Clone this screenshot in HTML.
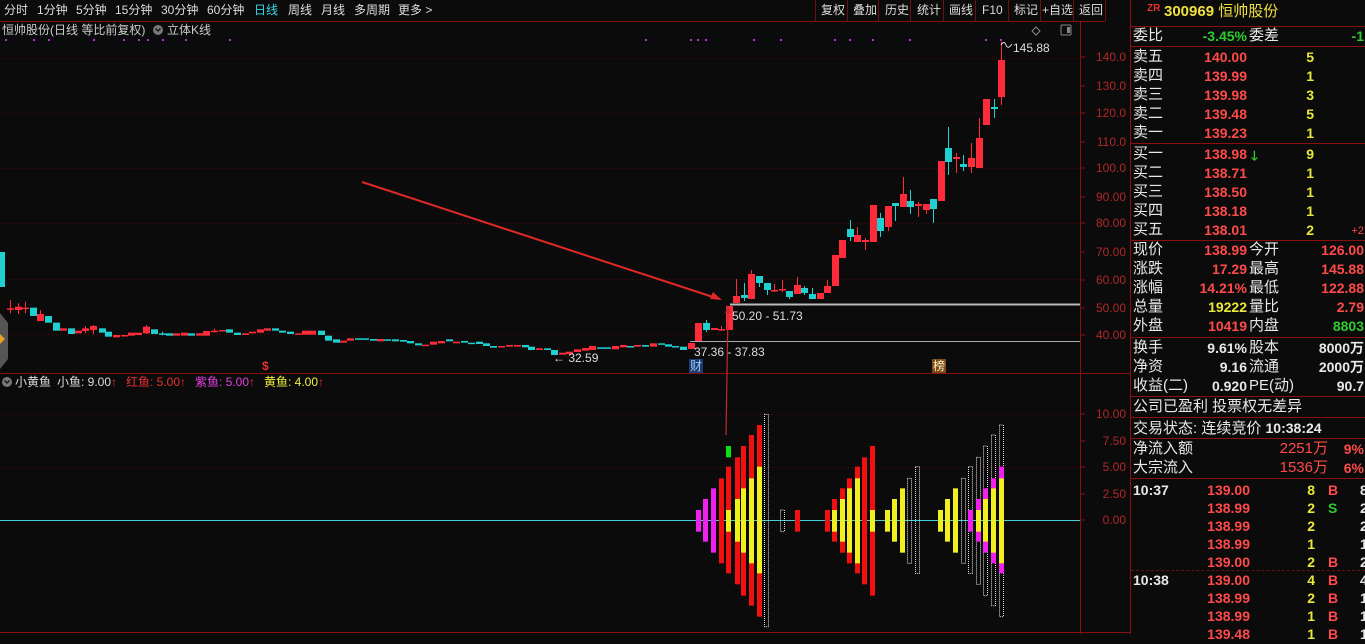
<!DOCTYPE html>
<html><head><meta charset="utf-8"><style>
*{margin:0;padding:0;box-sizing:border-box}
body{width:1365px;height:634px;background:#0b0b0b;overflow:hidden;position:relative;font-family:"Liberation Sans","Noto Sans CJK SC",sans-serif;color:#ddd}
.t{position:absolute;white-space:nowrap;font-size:12px;line-height:14px}
.rp{position:absolute;left:1131px;width:234px;font-size:15px;line-height:18px}
.row{position:absolute;left:0;width:234px;height:19px}
.row span{position:absolute;top:0;white-space:nowrap}
.r{color:#ff4a4a}.y{color:#e8e83c}.g{color:#2ecc2e}.w{color:#e8e8e8}
.num{font-weight:bold;font-size:14px}
.hl{position:absolute;left:1131px;width:234px;height:1px;background:#8a1010}
</style></head><body>
<svg id="s" width="1365" height="634" style="position:absolute;left:0;top:0"></svg>

<div class="t" style="left:4px;top:3px">分时</div>
<div class="t" style="left:37px;top:3px">1分钟</div>
<div class="t" style="left:76px;top:3px">5分钟</div>
<div class="t" style="left:115px;top:3px">15分钟</div>
<div class="t" style="left:161px;top:3px">30分钟</div>
<div class="t" style="left:207px;top:3px">60分钟</div>
<div class="t" style="left:254px;top:3px;color:#3cd8e8">日线</div>
<div class="t" style="left:288px;top:3px">周线</div>
<div class="t" style="left:321px;top:3px">月线</div>
<div class="t" style="left:354px;top:3px">多周期</div>
<div class="t" style="left:398px;top:3px">更多 &gt;</div>
<div class="t" style="left:821px;top:3px">复权</div>
<div class="t" style="left:853px;top:3px">叠加</div>
<div class="t" style="left:885px;top:3px">历史</div>
<div class="t" style="left:917px;top:3px">统计</div>
<div class="t" style="left:949px;top:3px">画线</div>
<div class="t" style="left:982px;top:3px">F10</div>
<div class="t" style="left:1014px;top:3px">标记</div>
<div class="t" style="left:1042px;top:3px">+自选</div>
<div class="t" style="left:1079px;top:3px">返回</div>
<div class="t" style="left:1147px;top:2px;color:#e83030;font-size:10px;font-weight:bold">ZR</div>
<div class="t" style="left:1164px;top:3px;color:#f0e040;font-size:15px;line-height:17px"><b>300969</b> 恒帅股份</div>

<div class="t" style="left:2px;top:23px;color:#ccc">恒帅股份(日线 等比前复权)</div>
<div class="t" style="left:167px;top:23px;color:#ccc">立体K线</div>

<div class="t" style="left:1013px;top:41px">145.88</div>
<div class="t" style="left:732px;top:309px">50.20 - 51.73</div>
<div class="t" style="left:694px;top:345px">37.36 - 37.83</div>
<div class="t" style="left:553px;top:351px">← 32.59</div>
<div class="t" style="left:689px;top:359px;background:#1c3c70;color:#9cc8ff;padding:0 1px">财</div>
<div class="t" style="left:932px;top:359px;background:#7a4a18;color:#fff0c0;padding:0 1px">榜</div>
<div class="t" style="left:262px;top:359px;color:#e83030;font-weight:bold">$</div>

<div class="t" style="left:15px;top:375px">小黄鱼</div>
<div class="t" style="left:57px;top:375px">小鱼: 9.00<span style="color:#e83030">↑</span></div>
<div class="t" style="left:126px;top:375px;color:#e83030">红鱼: 5.00↑</div>
<div class="t" style="left:195px;top:375px;color:#e040e0">紫鱼: 5.00<span style="color:#e83030">↑</span></div>
<div class="t" style="left:264px;top:375px;color:#f0f040">黄鱼: 4.00<span style="color:#e83030">↑</span></div>

<div id="ax"></div>

<div class="hl" style="top:26px"></div>
<div class="hl" style="top:46px"></div>
<div class="hl" style="top:143px"></div>
<div class="hl" style="top:240px"></div>
<div class="hl" style="top:337px"></div>
<div class="hl" style="top:396px"></div>
<div class="hl" style="top:417px"></div>
<div class="hl" style="top:438px"></div>
<div class="hl" style="top:478px"></div>
<div id="rp"></div>

<script>
const S=document.getElementById('s');let h='';
const ln=(x1,y1,x2,y2,c,w,d)=>h+=`<line x1="${x1}" y1="${y1}" x2="${x2}" y2="${y2}" stroke="${c}" stroke-width="${w||1}" ${d?`stroke-dasharray="${d}"`:''}/>`;
const rc=(x,y,w,hh,c)=>h+=`<rect x="${x}" y="${y}" width="${w}" height="${hh}" fill="${c}"/>`;
ln(0,21.5,1105,21.5,'#8a1010');ln(1130.5,0,1130.5,634,'#8a1010');
[815,847,878,910,943,975,1008,1040,1073,1105].forEach(x=>ln(x+.5,0,x+.5,21,'#6a1010'));
ln(1080.5,22,1080.5,634,'#8a1010');ln(0,373.5,1130,373.5,'#8a1010');ln(0,632.5,1130,632.5,'#8a1010');
[58,113,168,223,279,334].forEach(y=>ln(0,y+.5,1080,y+.5,'#5a0a0a',1,'1 3'));
[414,467,520].forEach(y=>ln(0,y+.5,1080,y+.5,'#5a0a0a',1,'1 3'));
[57,86,113,142,168,197,223,252,280,308,335].forEach(y=>ln(1080,y,1085,y,'#8a1010'));
[414,441,467,494,520].forEach(y=>ln(1080,y,1085,y,'#8a1010'));
[5,33,48,93,123,138,147,162,185,229,645,690,697,705,753,780,834,849,872,909,985,1000].forEach(x=>rc(x,39,2,2,'#b030d0'));
h+=`<circle cx="158" cy="30" r="5" fill="#777"/><path d="M155.5 28.5l2.5 2.5 2.5-2.5" stroke="#111" stroke-width="1.3" fill="none"/>`;
h+=`<circle cx="7" cy="382" r="5" fill="#777"/><path d="M4.5 380.5l2.5 2.5 2.5-2.5" stroke="#111" stroke-width="1.3" fill="none"/>`;
h+=`<path d="M1036 27l4 4-4 4-4-4z" stroke="#888" fill="none"/><rect x="1061" y="25" width="10" height="10" rx="1" stroke="#888" fill="none"/><rect x="1067" y="27" width="3" height="6" fill="#888"/>`;
h+=`<path d="M0 313l8 10v36l-8 10z" fill="#555"/><path d="M0 334l5 5-5 5z" fill="#e8a020"/>`;
rc(0,252,5,35,'#20d0d0');
const RED='#ff2a3a',CY='#20d0d0';
function cd(x,t,b,c,wt,wb){x=Math.round(x);const col=c=='r'?RED:CY;
 if(wt!=null||wb!=null)ln(x+.5,wt??t,x+.5,wb??b,col);
 if(b-t<1.5){rc(x-3,t,7,1.5,col)}else rc(x-3,t,7,b-t,col);}
const L=[[22,205,205,'r',180,220],[40,200,210,'r',190,222],[57,203,207,'r',185,220],[75,203,228,'c'],[90,222,243,'r',210,243],[108,228,248,'c'],[125,248,272,'c'],[142,265,272,'r'],[158,265,282,'c'],[175,272,280,'r'],[190,265,273,'r',258,280],[208,258,270,'r',255,282],[228,265,278,'c'],[242,275,290,'c'],[260,285,292,'r'],[277,285,288,'r'],[293,278,287,'r'],[310,278,285,'r'],[328,260,280,'r',255,282],[345,268,282,'c'],[362,280,281,'c',275,286],[378,280,287,'c'],[395,280,287,'r'],[412,278,287,'r'],[428,280,287,'c'],[445,280,287,'r'],[462,273,287,'r'],[480,272,273,'r',266,278],[497,270,273,'r'],[513,268,278,'c'],[530,278,285,'c'],[548,280,285,'r'],[565,275,280,'r'],[582,268,278,'r'],[598,265,272,'r'],[615,265,272,'c'],[632,272,278,'c'],[650,275,282,'c'],[667,280,284,'r'],[683,272,284,'r'],[700,272,284,'r'],[718,272,285,'c'],[735,287,302,'c'],[752,298,308,'c'],[768,302,308,'r'],[785,295,302,'r'],[802,295,299,'c'],[818,295,299,'c'],[835,297,302,'c'],[852,297,304,'r'],[868,298,302,'c'],[885,298,304,'c'],[902,300,305,'c'],[918,303,310,'c'],[937,310,316,'c'],[953,314,316,'r'],[970,305,314,'r'],[988,303,310,'r'],[1005,298,304,'c'],[1022,305,310,'r'],[1040,303,308,'c'],[1055,308,309,'c'],[1072,305,312,'c'],[1088,310,318,'c'],[1105,318,323,'c'],[1122,318,322,'r'],[1140,315,320,'r'],[1157,315,320,'r'],[1175,315,322,'c'],[1190,320,330,'c'],[1208,325,330,'r'],[1225,325,330,'c'],[1242,330,345,'c'],[1258,338,344,'r'],[1275,335,342,'r'],[1292,328,336,'r'],[1310,324,332,'r'],[1327,318,330,'r'],[1343,322,326,'c'],[1360,322,323,'c'],[1378,318,328,'r'],[1395,315,322,'r'],[1412,318,319,'c'],[1428,315,320,'r'],[1445,315,320,'c'],[1462,310,320,'r'],[1480,310,311,'c'],[1497,313,320,'c'],[1513,318,322,'c'],[1530,320,330,'c']];
L.forEach(a=>cd(a[0]/2.24,240+a[1]/3,240+a[2]/3,a[3],a[4]!=null?240+a[4]/3:null,a[5]!=null?240+a[5]/3:null));
const R=[[0,347,349,'c'],[1,343,349,'r'],[2,323,341,'r'],[3,323,330,'c',320,332],[4,328,330,'r'],[5,329,330,'r',326,331],[6,306,330,'r'],[7,296,303,'r',279,303],[8,295,298,'c',283,301],[9,274,299,'r',270,299],[10,276,283,'c',276,287],[11,283,290,'c',283,295],[12,290,291,'r',284,292],[13,289,290,'r',280,292],[14,291,297,'c',291,299],[15,285,294,'r',277,294],[16,288,293,'c',286,295],[17,294,299,'c',288,299],[18,293,299,'r'],[19,286,293,'r',280,293],[20,255,286,'r'],[21,240,258,'r'],[22,229,237,'c',220,241],[23,235,242,'r',227,242],[24,240,242,'r',238,250],[25,205,242,'r'],[26,218,231,'c',213,237],[27,206,227,'r',206,231],[28,203,206,'c',203,221],[29,194,207,'r',177,207],[30,201,207,'c',190,214],[31,204,206,'r',202,217],[32,204,210,'r',204,214],[33,199,209,'c',199,223],[34,161,201,'r'],[35,148,162,'c',127,175],[36,157,159,'r',153,173],[37,164,167,'c',155,171],[38,158,167,'r',143,173],[39,138,168,'r',118,168],[40,99,125,'r'],[41,107,109,'c',99,118],[42,60,97,'r',42,105]];
R.forEach(a=>cd(683.3+a[0]*7.57,a[1],a[2],a[3],a[4],a[5]));
ln(730,304.5,1080,304.5,'#bbb',2);ln(690,341.5,1080,341.5,'#aaa',1);
h+=`<path d="M1001 45q3-5 5 0t6-1" stroke="#ddd" fill="none"/>`;
ln(362,182,716,298,'#e02828',2);h+=`<path d="M722 300l-12-1 3-7z" fill="#e02828"/>`;
ln(726,435,728,312,'#c82828',1.2);h+=`<path d="M728 305l-3 8h6z" fill="#c82828"/>`;
ln(0,520.5,1080,520.5,'#40d0d8');
const B=(zx,t,b,c)=>{const x=Math.round(680+zx/3)-2;const y1=400+t/3,y2=400+b/3;
 if(c=='d')h+=`<rect x="${x+.5}" y="${y1}" width="4" height="${y2-y1}" fill="none" stroke="#ddd" stroke-dasharray="1 1"/>`;
 else rc(x,y1,5,y2-y1,{r:'#f01010',y:'#f0f020',m:'#f020f0',g:'#10e010'}[c]);};
const K=[[55,330,395,'m'],[75,297,425,'m'],[100,265,458,'m'],[122,235,490,'r'],[145,200,520,'r'],[145,330,395,'y'],[145,138,172,'g'],[170,172,553,'r'],[170,297,425,'y'],[190,138,587,'r'],[190,265,458,'y'],[213,105,617,'r'],[213,235,490,'y'],[236,75,650,'r'],[236,200,520,'y'],[259,43,680,'d'],[305,330,395,'d'],[350,330,395,'r'],
[440,330,395,'r'],[462,297,425,'r'],[462,330,395,'y'],[485,265,458,'r'],[485,297,425,'y'],[508,235,490,'r'],[508,265,458,'y'],[530,200,520,'r'],[530,235,490,'y'],[553,172,553,'r'],[576,138,587,'r'],[576,330,395,'y'],[620,330,395,'y'],[643,297,425,'y'],[666,265,458,'y'],[688,235,490,'d'],[712,200,520,'d'],
[780,330,395,'y'],[802,297,425,'y'],[826,265,458,'y'],[848,235,490,'d'],[870,200,520,'d'],[870,330,395,'m'],[893,172,553,'d'],[893,297,425,'m'],[893,330,395,'y'],[916,138,587,'d'],[916,265,458,'m'],[916,297,425,'y'],[940,105,617,'d'],[940,235,490,'m'],[940,265,458,'y'],[962,75,650,'d'],[962,200,520,'m'],[962,235,490,'y']];
K.forEach(a=>B(...a));
S.innerHTML=h;
let ax='';[['140.0',57],['130.0',86],['120.0',113],['110.0',142],['100.0',168],['90.00',197],['80.00',223],['70.00',252],['60.00',280],['50.00',308],['40.00',335],['10.00',414],['7.50',441],['5.00',467],['2.50',494],['0.00',520]].forEach(([t,y])=>ax+=`<div class="t" style="left:1086px;width:40px;text-align:right;top:${y-7}px;color:#b02828">${t}</div>`);
document.getElementById('ax').innerHTML=ax;
let r='';const row=(y,cells)=>{r+=`<div class="row" style="top:${y}px">`+cells.map(([x,t,c,al])=>`<span class="${c}" style="${al=='r'?`right:${234-x}px`:`left:${x}px`}">${t}</span>`).join('')+'</div>'};
const N=s=>`<b class="num">${s}</b>`;
row(27,[[2,'委比','w'],[116,N('-3.45%'),'g','r'],[118,'委差','w'],[233,N('-1'),'g','r']]);
[['卖五','140.00','5'],['卖四','139.99','1'],['卖三','139.98','3'],['卖二','139.48','5'],['卖一','139.23','1']].forEach((a,i)=>row(48+i*19,[[2,a[0],'w'],[116,N(a[1]),'r','r'],[183,N(a[2]),'y','r']]));
[['买一','138.98','9'],['买二','138.71','1'],['买三','138.50','1'],['买四','138.18','1'],['买五','138.01','2']].forEach((a,i)=>row(145+i*19,[[2,a[0],'w'],[116,N(a[1]),'r','r'],[183,N(a[2]),'y','r']]));
r+=`<span class="g" style="position:absolute;top:147px;left:120px;font-size:13px;font-weight:bold">🡓</span>`;
r+=`<span class="r" style="position:absolute;top:222px;right:1px;font-size:11px">+2</span>`;
[['现价','138.99','r','今开','126.00','r'],['涨跌','17.29','r','最高','145.88','r'],['涨幅','14.21%','r','最低','122.88','r'],['总量','19222','y','量比','2.79','r'],['外盘','10419','r','内盘','8803','g']].forEach((a,i)=>row(241+i*19,[[2,a[0],'w'],[116,N(a[1]),a[2],'r'],[118,a[3],'w'],[233,N(a[4]),a[5],'r']]));
[['换手','9.61%','股本','8000万'],['净资','9.16','流通','2000万'],['收益(二)','0.920','PE(动)','90.7']].forEach((a,i)=>row(339+i*19,[[2,a[0],'w'],[116,N(a[1]),'w','r'],[118,a[2],'w'],[233,N(a[3]),'w','r']]));
row(398,[[2,'公司已盈利 投票权无差异','w']]);
row(419,[[2,'交易状态: 连续竞价 <b class="num">10:38:24</b>','w']]);
row(440,[[2,'净流入额','w'],[197,'2251万','r','r'],[233,N('9%'),'r','r']]);
row(459,[[2,'大宗流入','w'],[197,'1536万','r','r'],[233,N('6%'),'r','r']]);
const T=[['10:37','139.00','8','B','8'],['','138.99','2','S','2'],['','138.99','2','','2'],['','138.99','1','','1'],['','139.00','2','B','2'],['10:38','139.00','4','B','4'],['','138.99','2','B','1'],['','138.99','1','B','1'],['','139.48','1','B','1']];
T.forEach((a,i)=>row(481+i*18,[[2,N(a[0]),'w'],[119,N(a[1]),'r','r'],[184,N(a[2]),'y','r'],[197,N(a[3]),a[3]=='S'?'g':'r'],[229,N(a[4]),'w']]));
r+=`<div style="position:absolute;left:0;top:570px;width:234px;border-top:1px dashed #6a1010"></div>`;
document.getElementById('rp').outerHTML=`<div class="rp" style="top:0;height:634px">${r}</div>`;
</script>
</body></html>
